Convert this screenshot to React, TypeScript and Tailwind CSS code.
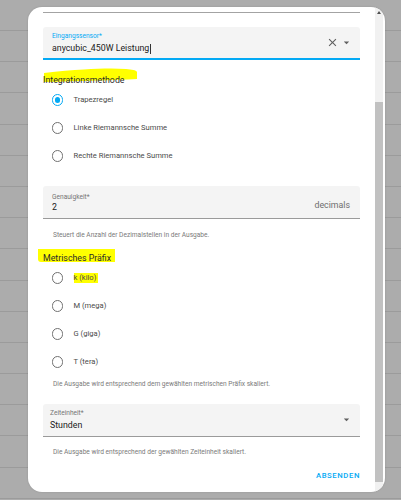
const rows = Array.from({ length: 16 });

const CloseIcon = () => (
  <svg width="13" height="13" viewBox="0 0 24 24" fill="#5f5f5f">
    <path d="M19 6.41L17.59 5 12 10.59 6.41 5 5 6.41 10.59 12 5 17.59 6.41 19 12 13.41 17.59 19 19 17.59 13.41 12z" />
  </svg>
);

const MenuDown = () => (
  <svg width="13" height="13" viewBox="0 0 24 24" fill="#5f5f5f">
    <path d="M7 10l5 5 5-5z" />
  </svg>
);

const Radio = ({ label, checked, marked }: { label: string; checked?: boolean; marked?: boolean }) => (
  <div className="h-[28px] flex items-center">
    <div
      className={
        checked
          ? "ml-[8.5px] w-[11.5px] h-[11.5px] rounded-full border-[1.2px] border-[#03a9f4] flex items-center justify-center"
          : "ml-[8.5px] w-[11.5px] h-[11.5px] rounded-full border-[1.1px] border-[#707070]"
      }
    >
      {checked && <div className="w-[5.5px] h-[5.5px] rounded-full bg-[#03a9f4]" />}
    </div>
    <span
      className={
        marked
          ? "ml-[10.5px] text-[7.6px] leading-[10px] text-[#4a4a4a] bg-[#ffff00] pr-[2px]"
          : "ml-[10.5px] text-[7.6px] leading-[10px] text-[#4a4a4a]"
      }
    >
      {label}
    </span>
  </div>
);

const Helper = ({ children }: { children: string }) => (
  <p className="pl-[10px] text-[6.6px] leading-[8px] text-[#7a7a7a]">{children}</p>
);

export default function App() {
  return (
    <div
      className="relative w-[401px] h-[500px] overflow-hidden bg-[#acacac] pt-[7px] pl-[28px]"
      style={{ fontFamily: "Roboto, 'Liberation Sans', sans-serif" }}
    >
      {/* list rows behind the dialog */}
      <div className="absolute inset-0 flex flex-col">
        <div className="h-[30px] shrink-0" />
        {rows.map((_, i) => (
          <div key={i} className="h-[31.2px] shrink-0 border-t border-[#9b9b9b]" />
        ))}
      </div>

      <div className="relative w-[357px] h-[485px] bg-white rounded-[14px] overflow-hidden flex shadow-[0_0_2px_rgba(0,0,0,0.15)]">
        <div className="flex-1 pl-[15px] pr-[15px] flex flex-col">
          <div className="h-[5px]" />
          <div className="h-px bg-[#a3a3a3]" />

          {/* Eingangssensor */}
          <div className="mt-[14px] h-[33px] bg-[#f4f4f4] rounded-t-[3px] border-b-2 border-[#03a9f4] flex items-start">
            <div className="flex-1 pl-[9px]">
              <div className="pt-[5px] text-[6.6px] leading-[8px] text-[#03a9f4]">Eingangssensor*</div>
              <div className="mt-[3px] flex items-center text-[8.8px] leading-[11px] text-[#212121]">
                anycubic_450W Leistung
                <span className="ml-[1px] w-px h-[10px] bg-[#333]" />
              </div>
            </div>
            <div className="flex items-center gap-[1px] pt-[9px] pr-[7px]">
              <CloseIcon />
              <MenuDown />
            </div>
          </div>

          {/* Integrationsmethode */}
          <div className="relative h-[26px] pt-[14px]">
            <svg className="absolute left-[1px] top-[8px]" width="93" height="14" viewBox="0 0 93 14">
              <path
                d="M0 5 C 15 3, 28 2, 40 1.5 C 55 0.5, 70 0, 82 1 C 88 1.5, 92 2, 93 4 L 93 11 C 70 12, 40 13, 0 14 Z"
                fill="#ffff00"
              />
            </svg>
            <h3 className="relative text-[8.8px] leading-[12px] text-[#2a2a2a]">Integrationsmethode</h3>
          </div>
          <Radio label="Trapezregel" checked />
          <Radio label="Linke Riemannsche Summe" />
          <Radio label="Rechte Riemannsche Summe" />

          {/* Genauigkeit */}
          <div className="mt-[16px] h-[33px] bg-[#f4f4f4] rounded-t-[3px] border-b border-[#9a9a9a] flex items-end pl-[9px] pr-[10px]">
            <div className="flex-1 h-full">
              <div className="pt-[7px] text-[6.6px] leading-[8px] text-[#757575]">Genauigkeit*</div>
              <div className="mt-[1px] text-[8.8px] leading-[11px] text-[#212121]">2</div>
            </div>
            <div className="pb-[7px] text-[8.8px] leading-[11px] text-[#6e6e6e]">decimals</div>
          </div>
          <div className="h-[26px] pt-[12px]">
            <Helper>Steuert die Anzahl der Dezimalstellen in der Ausgabe.</Helper>
          </div>

          {/* Metrisches Präfix */}
          <div className="relative h-[19px] pt-[7px]">
            <div className="absolute left-[-5px] top-[4px] w-[77px] h-[13px] bg-[#ffff00] rounded-bl-[3px]" />
            <h3 className="relative text-[8.8px] leading-[12px] text-[#2a2a2a]">Metrisches Präfix</h3>
          </div>
          <Radio label="k (kilo)" marked />
          <Radio label="M (mega)" />
          <Radio label="G (giga)" />
          <Radio label="T (tera)" />
          <div className="h-[16px] pt-[4px]">
            <Helper>Die Ausgabe wird entsprechend dem gewählten metrischen Präfix skaliert.</Helper>
          </div>

          {/* Zeiteinheit */}
          <div className="mt-[12px] h-[33px] bg-[#f4f4f4] rounded-t-[3px] border-b border-[#9a9a9a] flex items-start pl-[7px] pr-[7px]">
            <div className="flex-1">
              <div className="pt-[5px] text-[6.6px] leading-[8px] text-[#757575]">Zeiteinheit*</div>
              <div className="mt-[3px] text-[8.8px] leading-[11px] text-[#212121]">Stunden</div>
            </div>
            <div className="pt-[9px]">
              <MenuDown />
            </div>
          </div>
          <div className="h-[19px] pt-[11px]">
            <Helper>Die Ausgabe wird entsprechend der gewählten Zeiteinheit skaliert.</Helper>
          </div>

          <div className="mt-[16px] flex justify-end">
            <button className="text-[7.7px] leading-[8px] font-medium tracking-[0.6px] text-[#03a9f4]">
              ABSENDEN
            </button>
          </div>
        </div>

        {/* scrollbar */}
        <div className="w-[8px] mr-[2px] flex flex-col">
          <div className="h-[95px] bg-[#f1f1f1] flex justify-center pt-[4px]">
            <div className="w-0 h-0 border-l-[2.5px] border-r-[2.5px] border-b-[3px] border-l-transparent border-r-transparent border-b-[#505050]" />
          </div>
          <div className="h-[380px] bg-[#c1c1c1]" />
          <div className="flex-1 bg-[#f1f1f1]" />
        </div>
      </div>
    </div>
  );
}
